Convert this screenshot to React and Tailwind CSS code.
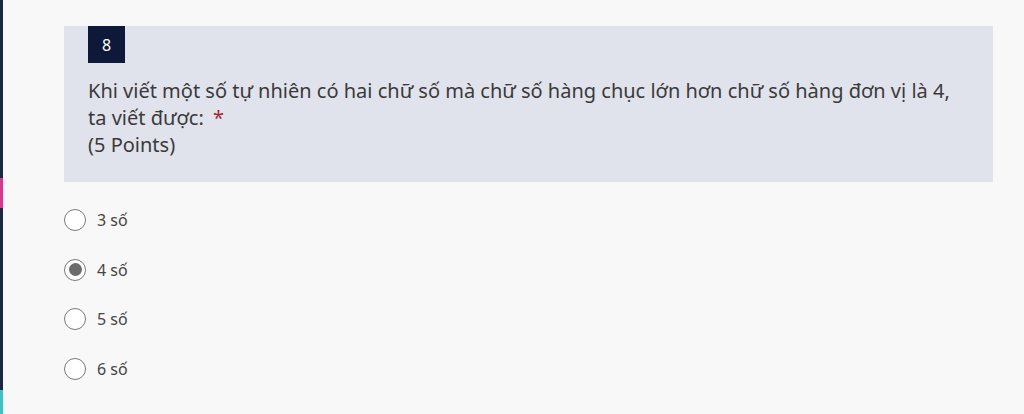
import React from "react";

const options = ["3 số", "4 số", "5 số", "6 số"];

export default function App() {
  return (
    <div className="flex h-[414px] w-[1024px] overflow-hidden bg-[#f8f8f8]" style={{ fontFamily: '"Noto Sans", "Open Sans", sans-serif' }}>
      <div className="flex w-[3px] flex-col bg-[#1d2647]">
        <div className="h-[178px]" />
        <div className="h-[30px] bg-[#e0338f]" />
        <div className="flex-1" />
        <div className="h-[24px] bg-[#3bc4c4]" />
      </div>
      <div className="flex-1 pl-[61px] pr-[31px] pt-[26px]">
        <div className="bg-[#e1e3ec] px-6 pb-[24px]">
          <div className="flex h-[37px] w-[37px] items-center justify-center bg-[#0e1838] text-[16px] text-white">8</div>
          <div className="mt-[14px] text-[20px] leading-[27px] text-[#3a3a3a]">
            <div>Khi viết một số tự nhiên có hai chữ số mà chữ số hàng chục lớn hơn chữ số hàng đơn vị là 4,</div>
            <div>
              ta viết được: <span className="ml-1 text-[#a4262c]">*</span>
            </div>
            <div>(5 Points)</div>
          </div>
        </div>
        <div className="mt-[27px] flex flex-col gap-[27.5px]">
          {options.map((o, i) => (
            <div key={o} className="flex h-[22px] items-center">
              <div className="flex h-[22px] w-[22px] items-center justify-center rounded-full border-[1.5px] border-[#7a7a7a] bg-white">
                {i === 1 && <div className="h-[13px] w-[13px] rounded-full bg-[#6b6b6b]" />}
              </div>
              <span className="ml-[11px] text-[16px] text-[#454545]">{o}</span>
            </div>
          ))}
        </div>
      </div>
    </div>
  );
}
